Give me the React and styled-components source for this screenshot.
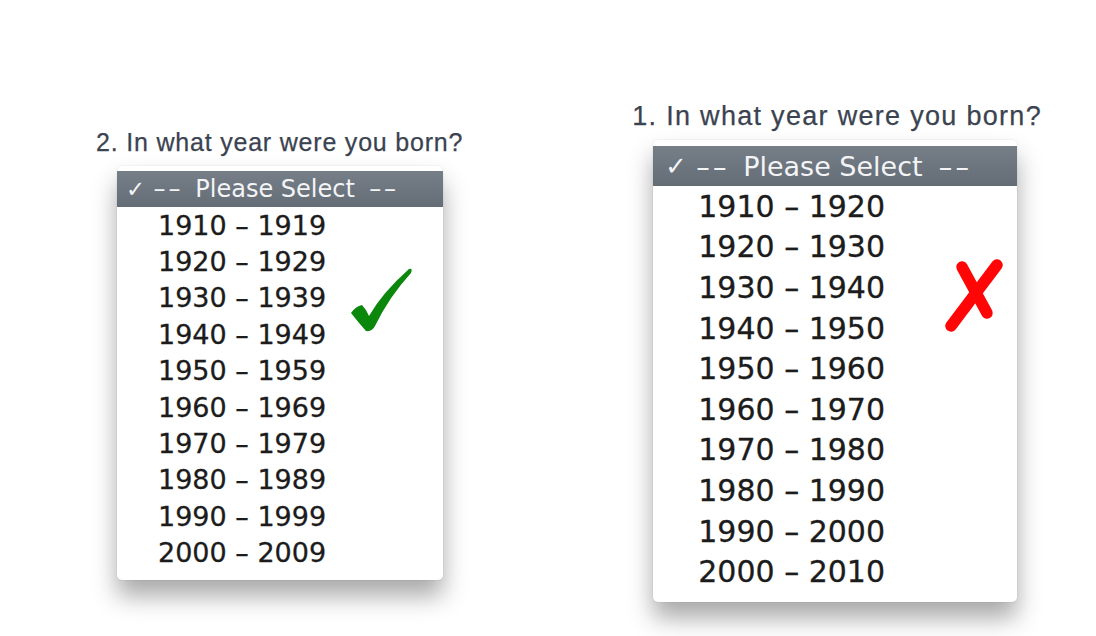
import React from "react";
import styled, { createGlobalStyle } from "styled-components";

const Global = createGlobalStyle`
  html, body { margin: 0; padding: 0; background: #ffffff; }
  body { width: 1096px; height: 636px; overflow: hidden; }
`;

const Page = styled.div`
  display: flex;
  align-items: flex-start;
  width: 1096px;
  height: 636px;
  padding-left: 96px;
  box-sizing: border-box;
`;

const Column = styled.div`
  display: flex;
  flex-direction: column;
  align-items: flex-start;
  margin-top: ${(p) => p.$top}px;
  margin-left: ${(p) => p.$left}px;
`;

const Question = styled.div`
  font-family: "Liberation Sans", Arial, sans-serif;
  font-size: ${(p) => p.$size}px;
  line-height: ${(p) => p.$line}px;
  letter-spacing: ${(p) => p.$spacing}px;
  color: #3b4350;
  -webkit-text-stroke: 0.25px #3b4350;
  white-space: nowrap;
`;

const Menu = styled.div`
  position: relative;
  margin-left: 21px;
  margin-top: ${(p) => p.$gap}px;
  width: ${(p) => p.$width}px;
  background: #ffffff;
  border-radius: 5px;
  padding: ${(p) => p.$padTop}px 0 ${(p) => p.$padBottom}px;
  box-shadow: 0 0 0 1px rgba(0, 0, 0, 0.03), 0 16px 24px rgba(0, 0, 0, 0.34);
  display: flex;
  flex-direction: column;
`;

const Header = styled.div`
  height: ${(p) => p.$height}px;
  display: flex;
  align-items: center;
  padding-left: ${(p) => p.$indent}px;
  background: linear-gradient(#767e88, #646c76);
  color: #f3f4f6;
  font-family: "DejaVu Sans", sans-serif;
  font-size: ${(p) => p.$size}px;
  white-space: nowrap;
`;

const Tick = styled.span`
  font-size: 0.95em;
`;

const Dashes = styled.span`
  letter-spacing: 0.12em;
  margin-left: ${(p) => p.$ml}em;
`;

const Label = styled.span`
  margin-left: 0.5em;
`;

const Item = styled.div`
  height: ${(p) => p.$height}px;
  display: flex;
  align-items: center;
  padding-left: ${(p) => p.$indent}px;
  font-family: "DejaVu Sans", sans-serif;
  font-size: ${(p) => p.$size}px;
  color: #1c1c1c;
  -webkit-text-stroke: 0.3px #1c1c1c;
  white-space: nowrap;
`;

const Mark = styled.svg`
  position: absolute;
  left: ${(p) => p.$x}px;
  top: ${(p) => p.$y}px;
`;

const GreenCheck = () => (
  <Mark $x={232} $y={100} width="66" height="68" viewBox="0 0 66 68">
    <path
      d="M2 47 Q7 40 13 39 Q17 43 20 50 Q33 27 60 3 Q64 2 62 7 Q40 31 26 60 Q23 66 17 65 Q9 56 2 47 Z"
      fill="#0b870b"
    />
  </Mark>
);

const RedCross = () => (
  <Mark $x={288} $y={118} width="64" height="76" viewBox="0 0 64 76">
    <g stroke="#ff0505" strokeWidth="11.5" strokeLinecap="round" fill="none">
      <line x1="21" y1="9" x2="46" y2="55" />
      <line x1="56" y1="7" x2="10" y2="68" />
    </g>
  </Mark>
);

const leftItems = [
  "1910 – 1919",
  "1920 – 1929",
  "1930 – 1939",
  "1940 – 1949",
  "1950 – 1959",
  "1960 – 1969",
  "1970 – 1979",
  "1980 – 1989",
  "1990 – 1999",
  "2000 – 2009",
];

const rightItems = [
  "1910 – 1920",
  "1920 – 1930",
  "1930 – 1940",
  "1940 – 1950",
  "1950 – 1960",
  "1960 – 1970",
  "1970 – 1980",
  "1980 – 1990",
  "1990 – 2000",
  "2000 – 2010",
];

const HeaderContent = () => (
  <>
    <Tick>✓</Tick>
    <Dashes $ml={0.35}>––</Dashes>
    <Label>Please Select</Label>
    <Dashes $ml={0.6}>––</Dashes>
  </>
);

export default function App() {
  return (
    <>
      <Global />
      <Page>
        <Column $top={127} $left={0}>
          <Question $size={25} $line={30} $spacing={0.8}>
            2. In what year were you born?
          </Question>
          <Menu $gap={9} $width={326} $padTop={5} $padBottom={9}>
            <Header $height={36} $indent={9} $size={24}>
              <HeaderContent />
            </Header>
            {leftItems.map((t) => (
              <Item key={t} $height={36.4} $indent={41} $size={27}>
                {t}
              </Item>
            ))}
            <GreenCheck />
          </Menu>
        </Column>
        <Column $top={100} $left={169}>
          <Question $size={27} $line={32} $spacing={1.3}>
            1. In what year were you born?
          </Question>
          <Menu $gap={8} $width={364} $padTop={6} $padBottom={10}>
            <Header $height={40} $indent={12} $size={27}>
              <HeaderContent />
            </Header>
            {rightItems.map((t) => (
              <Item key={t} $height={40.6} $indent={45} $size={30}>
                {t}
              </Item>
            ))}
            <RedCross />
          </Menu>
        </Column>
      </Page>
    </>
  );
}
